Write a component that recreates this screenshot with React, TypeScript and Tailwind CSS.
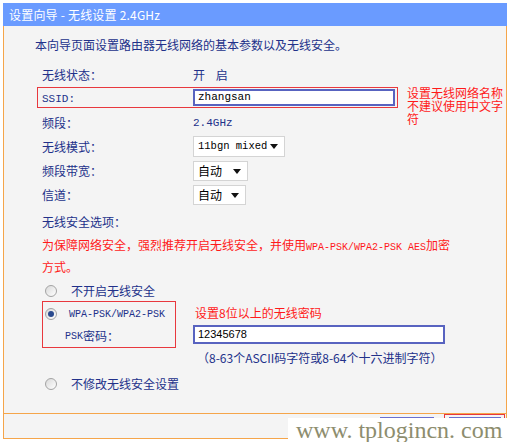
import React from "react";

function Radio({ checked }: { checked?: boolean }) {
    return (
        <span className="w-[12px] h-[12px] rounded-full border border-[#a3a3a3] bg-linear-to-br from-[#d9d9d9] to-[#ffffff] flex items-center justify-center shrink-0">
            {checked && <span className="w-[6px] h-[6px] rounded-full bg-[#2a4a8e]" />}
        </span>
    );
}

function Label({ children }: { children: React.ReactNode }) {
    return <div className="w-[151px] shrink-0">{children}</div>;
}

function Arrow() {
    return (
        <svg width="8" height="5" viewBox="0 0 8 5" className="shrink-0">
            <path d="M0 0 L8 0 L4 5 Z" fill="#111" />
        </svg>
    );
}

export default function App() {
    return (
        <div className="w-[510px] h-[442px] bg-white relative overflow-hidden text-[12px] font-['Noto_Sans_CJK_SC',sans-serif] text-[#22318a]">
            {/* title bar */}
            <div className="mt-[3px] mx-[3px] h-[23px] bg-[#6a9bff] text-white flex items-center pl-[6px] text-[12px] tracking-[0.2px]">
                设置向导 - 无线设置 2.4GHz
            </div>

            {/* main panel */}
            <div className="mx-[3px] h-[388px] bg-[#f4f4f4] border-x border-b border-[#f5a54a] px-[38px] pt-[10px] flex flex-col">
                <div className="h-[18px] flex items-center -ml-[7px]">
                    本向导页面设置路由器无线网络的基本参数以及无线安全。
                </div>

                <div className="mt-[12px] h-[18px] flex items-center">
                    <Label>无线状态：</Label>
                    <div className="tracking-[4px]">开 启</div>
                </div>

                <div className="mt-[3px] h-[21px] -ml-[5px] w-[361px] border border-[#e8383d] pl-[4px] flex items-center relative">
                    <Label>
                        <span className="font-['Liberation_Mono',monospace] text-[11px]">SSID:</span>
                    </Label>
                    <div className="w-[202px] h-[17px] bg-white border-2 border-[#5863c0] flex items-center pl-[3px] font-['Liberation_Mono',monospace] text-[11px] text-black">
                        zhangsan
                    </div>
                    <div className="absolute left-[369px] top-[-2px] w-[98px] text-[#ff1a1a] text-[12px] leading-[13px]">
                        设置无线网络名称不建议使用中文字符
                    </div>
                </div>

                <div className="mt-[6px] h-[18px] flex items-center">
                    <Label>频段：</Label>
                    <div className="font-['Liberation_Mono',monospace] text-[11px]">2.4GHz</div>
                </div>

                <div className="mt-[4px] h-[21px] flex items-center">
                    <Label>无线模式：</Label>
                    <div className="w-[92px] h-[21px] bg-white border border-[#d4d4d4] flex items-center justify-between pl-[4px] pr-[6px] font-['Liberation_Mono',monospace] text-[10.5px] text-black">
                        11bgn mixed
                        <Arrow />
                    </div>
                </div>

                <div className="mt-[4px] h-[20px] flex items-center">
                    <Label>频段带宽：</Label>
                    <div className="w-[55px] h-[20px] bg-white border border-[#d4d4d4] flex items-center justify-between pl-[4px] pr-[6px] text-black">
                        自动
                        <Arrow />
                    </div>
                </div>

                <div className="mt-[4px] h-[20px] flex items-center">
                    <Label>信道：</Label>
                    <div className="w-[53px] h-[20px] bg-white border border-[#d4d4d4] flex items-center justify-between pl-[4px] pr-[6px] text-black">
                        自动
                        <Arrow />
                    </div>
                </div>

                <div className="mt-[8px] h-[18px] flex items-center">无线安全选项：</div>

                <div className="mt-[4px] leading-[19px] text-[#ff1a1a] w-[420px]">
                    为保障网络安全，强烈推荐开启无线安全，并使用<span className="font-['Liberation_Mono',monospace] text-[10px] leading-[19px]">WPA-PSK/WPA2-PSK AES</span>加密方式。
                </div>

                <div className="mt-[6px] h-[18px] flex items-center pl-[3px] gap-[14px]">
                    <Radio />
                    <span>不开启无线安全</span>
                </div>

                <div className="mt-[1px] h-[47px] flex">
                    <div className="w-[134px] h-[47px] border border-[#e8383d] pl-[2px] flex flex-col">
                        <div className="h-[24px] flex items-center gap-[12px]">
                            <Radio checked />
                            <span className="font-['Liberation_Mono',monospace] text-[10px]">WPA-PSK/WPA2-PSK</span>
                        </div>
                        <div className="h-[20px] flex items-center pl-[20px]">
                            <span className="font-['Liberation_Mono',monospace] text-[10px]">PSK</span>密码：
                        </div>
                    </div>
                    <div className="ml-[17px] flex flex-col">
                        <div className="h-[24px] flex items-center text-[#ff1a1a] pl-[2px]">设置8位以上的无线密码</div>
                        <div className="w-[252px] h-[19px] bg-white border-2 border-[#5863c0] flex items-center pl-[3px] font-['Liberation_Sans',sans-serif] text-[11px] text-black">
                            12345678
                        </div>
                    </div>
                </div>

                <div className="mt-[1px] h-[18px] flex items-center pl-[155px]">
                    （8-63个ASCII码字符或8-64个十六进制字符）
                </div>

                <div className="mt-[8px] h-[18px] flex items-center pl-[3px] gap-[14px]">
                    <Radio />
                    <span>不修改无线安全设置</span>
                </div>
            </div>

            {/* button bar */}
            <div className="mx-[3px] h-[25px] bg-[#f4f4f4] border-x border-b border-[#f5a54a] flex justify-end items-start pr-[1px]">
                <div className="mt-[3px] w-[54px] h-[20px] border-t-2 border-[#6a6fcf] mr-[10px]" />
                <div className="w-[61px] h-[24px] border border-[#e8383d] flex justify-center">
                    <div className="mt-[2px] w-[52px] h-[20px] border-t-2 border-[#6a6fcf]" />
                </div>
            </div>

            {/* watermark */}
            <div className="absolute left-[288px] top-[418px] right-0 bottom-0 bg-white flex items-center pl-[8px] font-['Liberation_Serif',serif] text-[24px] leading-none text-[#8d8d6e] whitespace-nowrap">
                www. tplogincn. com
            </div>
        </div>
    );
}
